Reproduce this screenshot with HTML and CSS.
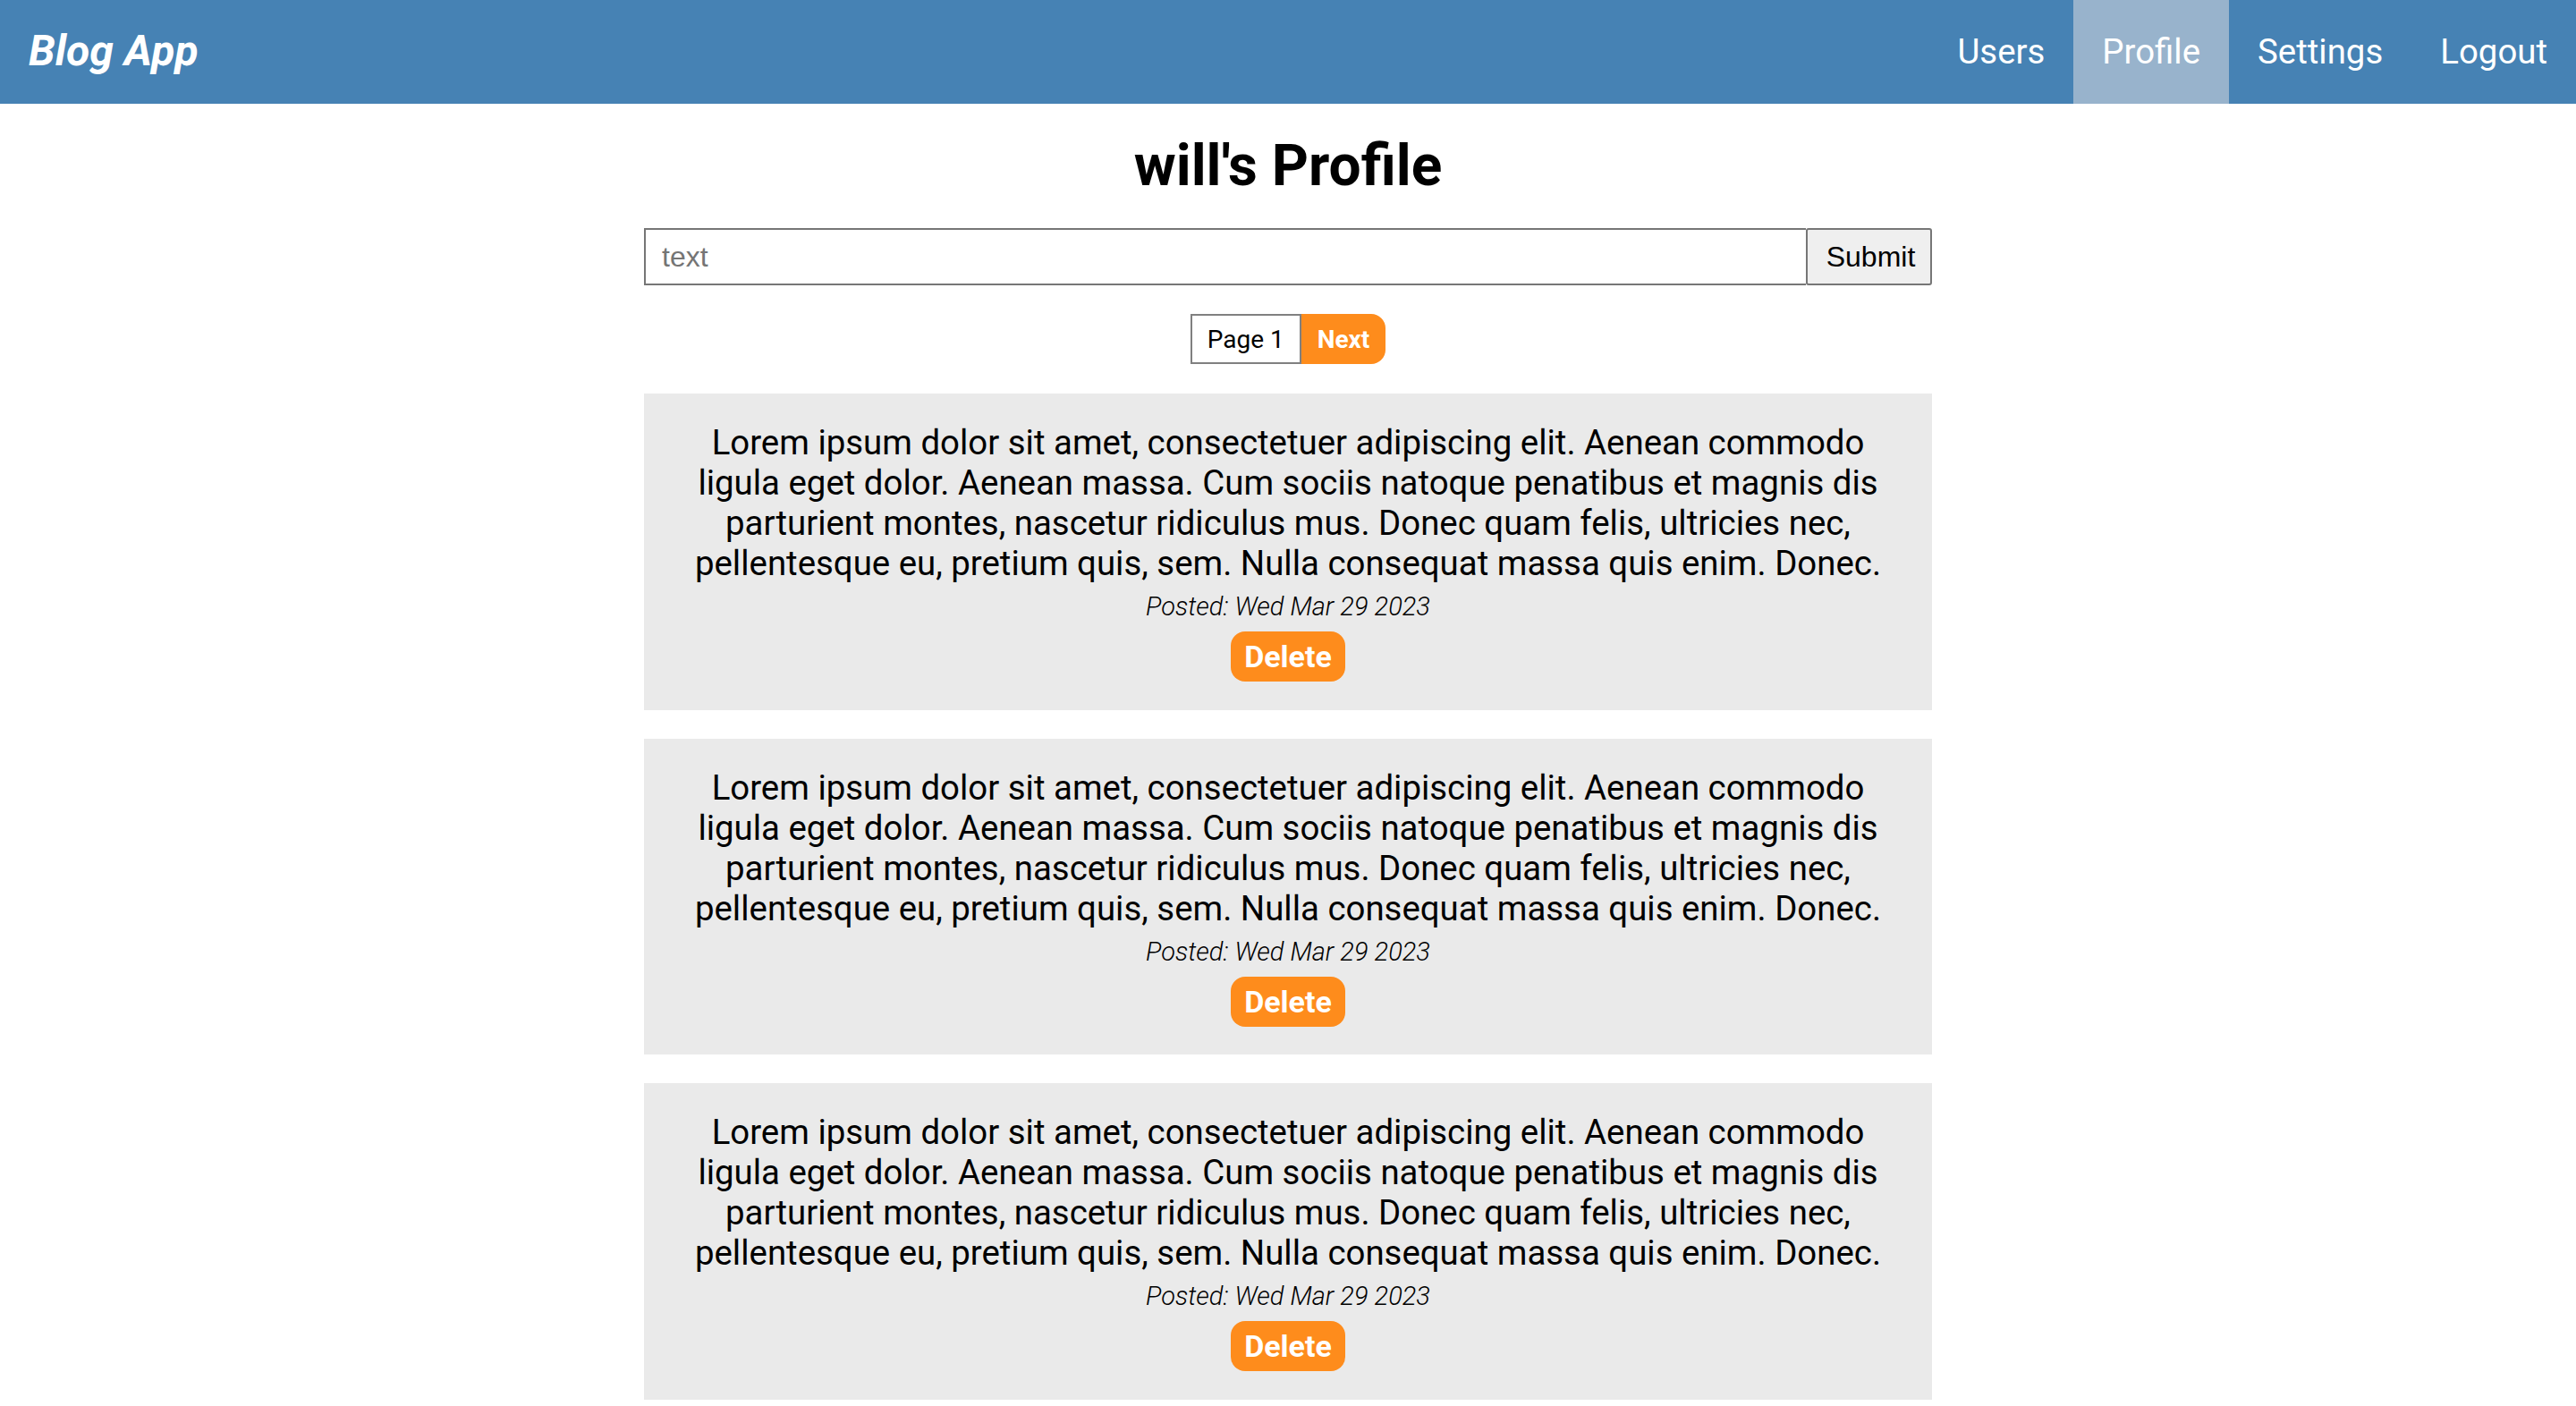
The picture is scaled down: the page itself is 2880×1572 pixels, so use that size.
FILE: index.html
```html
<!DOCTYPE html>
<html lang="en">
<head>
<meta charset="utf-8">
<title>Blog App</title>
<link rel="stylesheet" href="styles.css">
</head>
<body>
<nav class="navbar">
  <a class="brand" href="#">Blog App</a>
  <ul class="nav-links">
    <li><a href="#">Users</a></li>
    <li><a class="active" href="#">Profile</a></li>
    <li><a href="#">Settings</a></li>
    <li><a href="#">Logout</a></li>
  </ul>
</nav>
<main class="main">
  <h1 class="title">will's Profile</h1>
  <form class="post-form">
    <input class="post-input" type="text" placeholder="text">
    <button class="submit-btn" type="button">Submit</button>
  </form>
  <div class="pager">
    <span class="page-label">Page 1</span>
    <button class="next-btn" type="button">Next</button>
  </div>
  <article class="post">
    <p class="post-text">Lorem ipsum dolor sit amet, consectetuer adipiscing elit. Aenean commodo ligula eget dolor. Aenean massa. Cum sociis natoque penatibus et magnis dis parturient montes, nascetur ridiculus mus. Donec quam felis, ultricies nec, pellentesque eu, pretium quis, sem. Nulla consequat massa quis enim. Donec.</p>
    <p class="post-date">Posted: Wed Mar 29 2023</p>
    <button class="delete-btn" type="button">Delete</button>
  </article>
  <article class="post">
    <p class="post-text">Lorem ipsum dolor sit amet, consectetuer adipiscing elit. Aenean commodo ligula eget dolor. Aenean massa. Cum sociis natoque penatibus et magnis dis parturient montes, nascetur ridiculus mus. Donec quam felis, ultricies nec, pellentesque eu, pretium quis, sem. Nulla consequat massa quis enim. Donec.</p>
    <p class="post-date">Posted: Wed Mar 29 2023</p>
    <button class="delete-btn" type="button">Delete</button>
  </article>
  <article class="post">
    <p class="post-text">Lorem ipsum dolor sit amet, consectetuer adipiscing elit. Aenean commodo ligula eget dolor. Aenean massa. Cum sociis natoque penatibus et magnis dis parturient montes, nascetur ridiculus mus. Donec quam felis, ultricies nec, pellentesque eu, pretium quis, sem. Nulla consequat massa quis enim. Donec.</p>
    <p class="post-date">Posted: Wed Mar 29 2023</p>
    <button class="delete-btn" type="button">Delete</button>
  </article>
</main>
</body>
</html>
```
FILE: styles.css
```css
* {
  box-sizing: border-box;
}

html, body {
  margin: 0;
  padding: 0;
  background: #ffffff;
  font-family: Roboto, "Noto Sans", sans-serif;
  color: #000000;
}

.navbar {
  height: 116px;
  background: #4682b4;
  display: flex;
  align-items: stretch;
  justify-content: space-between;
}

.brand {
  display: flex;
  align-items: center;
  padding-left: 32px;
  padding-bottom: 4px;
  color: #ffffff;
  text-decoration: none;
  font-size: 48px;
  font-weight: 700;
  font-style: italic;
}

.nav-links {
  list-style: none;
  margin: 0;
  padding: 0;
  display: flex;
  align-items: stretch;
}

.nav-links li {
  display: flex;
}

.nav-links a {
  display: flex;
  align-items: center;
  padding: 0 32px 2px;
  color: #ffffff;
  text-decoration: none;
  font-size: 38.4px;
}

.nav-links a.active {
  background: #98b3cc;
}

.main {
  width: 1440px;
  margin: 0 auto;
  padding-top: 32px;
  display: flex;
  flex-direction: column;
  align-items: stretch;
  gap: 32px;
}

.title {
  margin: 0;
  text-align: center;
  font-size: 64px;
  font-weight: 700;
  line-height: 75px;
}

.post-form {
  display: flex;
  height: 64px;
}

.post-input {
  flex: 1;
  height: 64px;
  margin: 0;
  padding: 0 18px;
  border: 2px solid #767676;
  border-right: none;
  font-family: "Liberation Sans", Arial, sans-serif;
  font-size: 32px;
  color: #000000;
  background: #ffffff;
  outline: none;
}

.post-input::placeholder {
  color: #757575;
}

.submit-btn {
  width: 141px;
  height: 64px;
  margin: 0;
  padding: 0 16px 0 20px;
  border: 2px solid #767676;
  border-radius: 3px;
  background: #efefef;
  font-family: "Liberation Sans", Arial, sans-serif;
  font-size: 32px;
  color: #000000;
}

.pager {
  display: flex;
  justify-content: center;
  height: 56px;
  margin-bottom: 1px;
}

.page-label {
  display: flex;
  align-items: center;
  height: 56px;
  padding: 0 17px;
  border: 2px solid #808080;
  font-size: 28px;
}

.next-btn {
  height: 56px;
  margin: 0;
  padding: 0 18px;
  border: none;
  border-radius: 0 16px 16px 0;
  background: #fe8c1c;
  color: #ffffff;
  font-family: Roboto, sans-serif;
  font-size: 28px;
  font-weight: 700;
}

.post {
  background: #eaeaea;
  padding: 32px 32px 31.5px;
  display: flex;
  flex-direction: column;
  align-items: center;
  text-align: center;
}

.post-text {
  margin: 0;
  font-size: 38.4px;
  line-height: 45px;
}

.post-date {
  margin: 10px 0 0;
  font-size: 29px;
  font-style: italic;
  font-weight: 300;
  line-height: 33px;
}

.delete-btn {
  margin-top: 11px;
  height: 56px;
  padding: 0 15px;
  border: none;
  border-radius: 16px;
  background: #fe8c1c;
  color: #ffffff;
  font-family: Roboto, sans-serif;
  font-size: 34px;
  font-weight: 700;
}
```
